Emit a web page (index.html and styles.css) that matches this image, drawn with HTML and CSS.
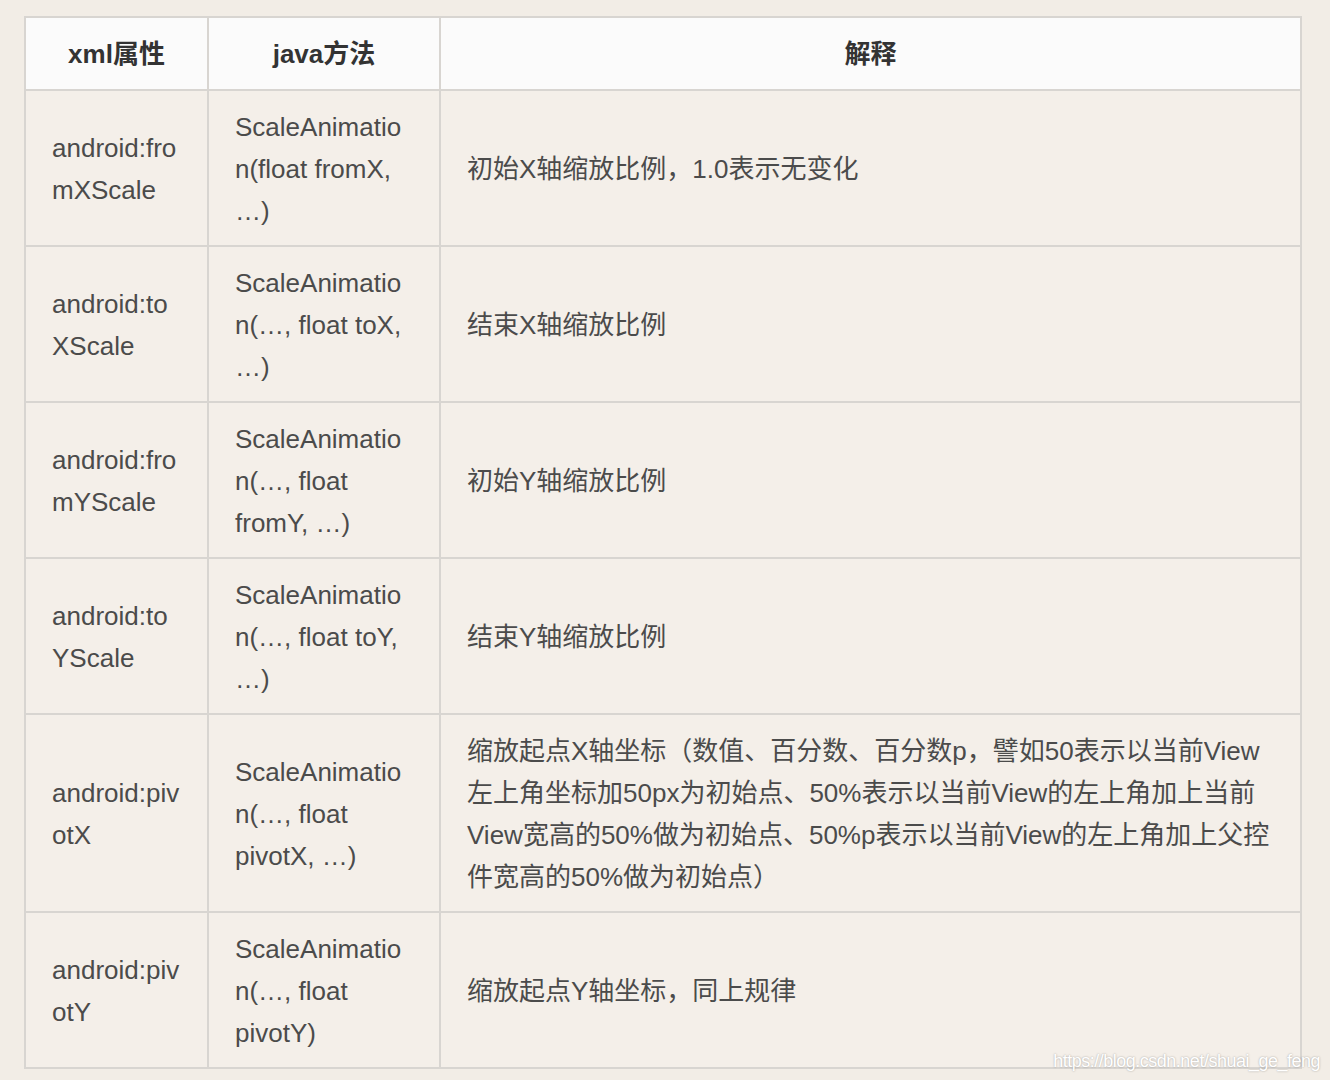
FILE: index.html
```html
<!DOCTYPE html>
<html lang="zh-CN">
<head>
<meta charset="utf-8">
<title>ScaleAnimation 属性</title>
<link rel="stylesheet" href="styles.css">
</head>
<body>
<div class="page">
  <table class="attr-table">
    <colgroup>
      <col class="col-xml">
      <col class="col-java">
      <col class="col-desc">
    </colgroup>
    <thead>
      <tr>
        <th>xml属性</th>
        <th>java方法</th>
        <th>解释</th>
      </tr>
    </thead>
    <tbody>
      <tr class="row">
        <td>android:fromXScale</td>
        <td>ScaleAnimation(float fromX, …)</td>
        <td class="desc">初始X轴缩放比例，1.0表示无变化</td>
      </tr>
      <tr class="row">
        <td>android:toXScale</td>
        <td>ScaleAnimation(…, float toX, …)</td>
        <td class="desc">结束X轴缩放比例</td>
      </tr>
      <tr class="row">
        <td>android:fromYScale</td>
        <td>ScaleAnimation(…, float fromY, …)</td>
        <td class="desc">初始Y轴缩放比例</td>
      </tr>
      <tr class="row">
        <td>android:toYScale</td>
        <td>ScaleAnimation(…, float toY, …)</td>
        <td class="desc">结束Y轴缩放比例</td>
      </tr>
      <tr class="row">
        <td>android:pivotX</td>
        <td>ScaleAnimation(…, float pivotX, …)</td>
        <td class="desc">缩放起点X轴坐标（数值、百分数、百分数p，譬如50表示以当前View左上角坐标加50px为初始点、50%表示以当前View的左上角加上当前View宽高的50%做为初始点、50%p表示以当前View的左上角加上父控件宽高的50%做为初始点）</td>
      </tr>
      <tr class="row">
        <td>android:pivotY</td>
        <td>ScaleAnimation(…, float pivotY)</td>
        <td class="desc">缩放起点Y轴坐标，同上规律</td>
      </tr>
    </tbody>
  </table>
  <div class="watermark">https://blog.csdn.net/shuai_ge_feng</div>
</div>
</body>
</html>
```

FILE: styles.css
```css
html, body {
  margin: 0;
  padding: 0;
  background: #f2ede6;
  height: 1080px;
  overflow: hidden;
}

.page {
  position: relative;
  height: 1080px;
  padding: 16px 0 0 24px;
  box-sizing: border-box;
  font-family: "Liberation Sans", "Noto Sans CJK SC", sans-serif;
}

.attr-table {
  table-layout: fixed;
  width: 1276px;
  border-collapse: collapse;
  border: 2px solid #d3d0cc;
  background: #f4efe9;
  color: #4b4b4b;
  font-size: 26px;
  line-height: 42px;
}

.col-xml { width: 183px; }
.col-java { width: 232px; }
.col-desc { width: 861px; }

.attr-table th,
.attr-table td {
  border: 2px solid #d8d5d1;
  padding: 15px 26px 13px;
  vertical-align: middle;
  text-align: left;
  overflow-wrap: anywhere;
}

.attr-table th {
  background: #fbfbfb;
  color: #333333;
  font-weight: bold;
  text-align: center;
  padding: 15px 26px 14px;
}

.attr-table td.desc {
  padding-right: 20px;
}

.watermark {
  position: absolute;
  right: 10px;
  top: 1050px;
  font-family: "Liberation Sans", sans-serif;
  font-size: 18px;
  line-height: 22px;
  color: #ffffff;
  text-shadow: 0 0 2px rgba(0, 0, 0, 0.35);
  letter-spacing: -0.5px;
}
```
